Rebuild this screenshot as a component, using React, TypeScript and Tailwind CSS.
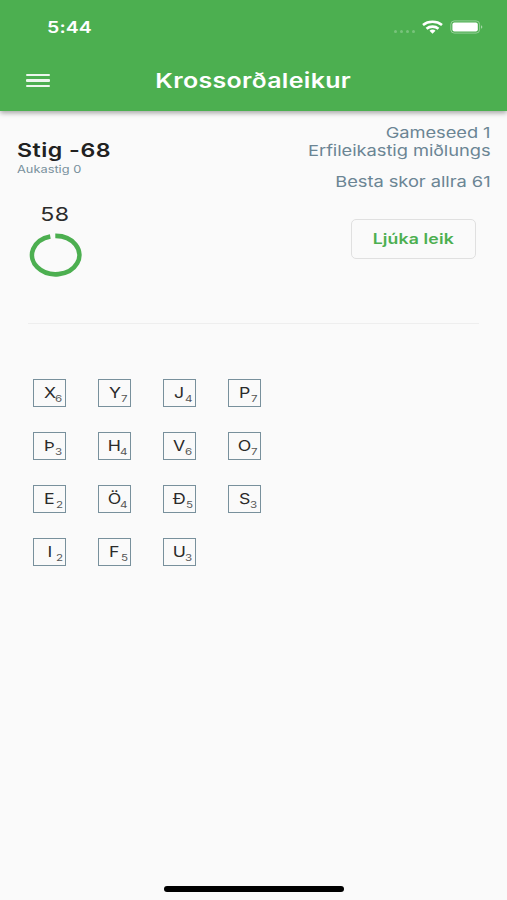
import clsx from "clsx";

interface Tile {
  letter: string;
  points: number;
  // where the small number starts inside the tile
  offset: string;
}

const tiles: Tile[] = [
  { letter: "X", points: 6, offset: "left-[21px]" },
  { letter: "Y", points: 7, offset: "left-[22px]" },
  { letter: "J", points: 4, offset: "left-[20.5px]" },
  { letter: "P", points: 7, offset: "left-[22px]" },
  { letter: "Þ", points: 3, offset: "left-[21px]" },
  { letter: "H", points: 4, offset: "left-[20.5px]" },
  { letter: "V", points: 6, offset: "left-[20.5px]" },
  { letter: "O", points: 7, offset: "left-[22px]" },
  { letter: "E", points: 2, offset: "left-[22px]" },
  { letter: "Ö", points: 4, offset: "left-[20.5px]" },
  { letter: "Ð", points: 5, offset: "left-[22px]" },
  { letter: "S", points: 3, offset: "left-[21px]" },
  { letter: "I", points: 2, offset: "left-[22px]" },
  { letter: "F", points: 5, offset: "left-[22px]" },
  { letter: "U", points: 3, offset: "left-[21px]" },
];

/* ================= STATUS BAR ================= */
function StatusBar() {
  return (
    <div className="flex h-[50px] items-start justify-between pl-[46.5px] pr-[23px] pt-[15px] text-white">
      <span className="inline-block origin-left scale-x-[1.22] text-[16px] leading-[24px] font-semibold tracking-[0.1px]">
        5:44
      </span>
      <div className="flex h-[24px] items-center">
        <div className="mt-[9px] mr-[7px] flex gap-[3px]">
          <i className="h-[3px] w-[3px] rounded-full bg-white/25" />
          <i className="h-[3px] w-[3px] rounded-full bg-white/25" />
          <i className="h-[3px] w-[3px] rounded-full bg-white/25" />
          <i className="h-[3px] w-[3px] rounded-full bg-white/25" />
        </div>
        <svg
          className="mr-[7px] h-[14px] w-[21px]"
          viewBox="0 0 21 14"
          fill="none"
          stroke="white"
          strokeWidth="2.6"
        >
          <path d="M1 4.9C6.2 0.7 14.8 0.7 20 4.9" />
          <path d="M4.5 8.7C7.8 5.9 13.2 5.9 16.5 8.7" />
          <path
            d="M7.5 10.8C9.2 9.2 11.8 9.2 13.5 10.8L10.5 13.8Z"
            fill="white"
            stroke="none"
          />
        </svg>
        <svg className="h-[14px] w-[34px]" viewBox="0 0 34 14">
          <rect
            x="0.8"
            y="0.9"
            width="28.8"
            height="12.2"
            rx="3.5"
            fill="none"
            stroke="white"
            strokeOpacity="0.4"
          />
          <rect x="2.4" y="2.4" width="25.4" height="9.2" rx="2" fill="white" />
          <path d="M31 5.2C32.8 5.8 32.8 8.2 31 8.8Z" fill="white" fillOpacity="0.5" />
        </svg>
      </div>
    </div>
  );
}

/* ================= LETTER TILE ================= */
function LetterTile({ letter, points, offset }: Tile) {
  return (
    <div className="relative flex h-[28px] w-[33px] items-center justify-center border-[1.5px] border-[#78909c] text-[#2b2b2b]">
      <span className="inline-block scale-x-[1.22] text-[14.5px] leading-[26px]">
        {letter}
      </span>
      <span
        className={clsx(
          "absolute bottom-[1px] inline-block origin-left scale-x-[1.22] text-[9.5px] leading-[12px] text-[#555]",
          offset
        )}
      >
        {points}
      </span>
    </div>
  );
}

export default function App() {
  return (
    <div className="flex h-[900px] w-[507px] flex-col overflow-hidden bg-[#fafafa] font-['Inter','Liberation_Sans',sans-serif]">
      {/* ================= HEADER ================= */}
      <header className="h-[110.5px] shrink-0 bg-[#4caf50] shadow-[0_2px_5px_rgba(0,0,0,0.35)]">
        <StatusBar />
        <div className="grid h-[61px] grid-cols-[1fr_auto_1fr] items-center px-[25.5px]">
          <div className="flex w-[24px] flex-col gap-[3px]">
            <i className="h-[2.5px] rounded-[1px] bg-white/90" />
            <i className="h-[2.5px] rounded-[1px] bg-white/90" />
            <i className="h-[2.5px] rounded-[1px] bg-white/90" />
          </div>
          <h1 className="mt-[2px] scale-x-[1.22] text-[20.5px] font-semibold tracking-[0.25px] text-white">
            Krossorðaleikur
          </h1>
        </div>
      </header>

      {/* ================= SCORES ================= */}
      <section className="flex h-[91.5px] shrink-0 justify-between px-[16.5px] pt-[13px]">
        <div className="pt-[15.5px]">
          <h2 className="origin-left scale-x-[1.22] text-[19px] leading-[24px] font-semibold tracking-[0.4px] text-[#212121]">
            Stig -68
          </h2>
          <p className="origin-left scale-x-[1.22] text-[10.5px] leading-[13px] text-[#78909c]">
            Aukastig 0
          </p>
        </div>
        <div className="origin-right scale-x-[1.22] text-right text-[15px] leading-[18px] tracking-[-0.05px] text-[#6b8594]">
          <p>Gameseed 1</p>
          <p>Erfileikastig miðlungs</p>
          <p className="mt-[13px]">Besta skor allra 61</p>
        </div>
      </section>

      {/* ================= TIMER + FINISH ================= */}
      <section className="mx-[28px] flex h-[122px] shrink-0 justify-between border-b border-[#eeeeee] pr-[3px]">
        <div className="flex w-[54px] flex-col items-center">
          <span className="scale-x-[1.22] text-[19px] leading-[26px] tracking-[0.3px] text-[#2b2b2b]">
            58
          </span>
          <svg className="mt-[4px] h-[46px] w-[54px]" viewBox="0 0 54 46">
            <path
              d="M27.3 3.9A23.7 19.2 0 1 1 22.3 4.4"
              fill="none"
              stroke="#4caf50"
              strokeWidth="4.6"
            />
          </svg>
        </div>
        <button className="mt-[17px] flex h-[40px] w-[125px] items-center justify-center rounded-[5px] border-[1.5px] border-[#e0e0e0] text-[#4caf50]">
          <span className="scale-x-[1.22] text-[14.5px] font-semibold tracking-[0.1px]">
            Ljúka leik
          </span>
        </button>
      </section>

      {/* ================= LETTERS ================= */}
      <section className="grid grid-cols-[repeat(4,33px)] gap-x-[32px] gap-y-[25.3px] pt-[54.5px] pl-[33px]">
        {tiles.map((tile) => (
          <LetterTile key={tile.letter} {...tile} />
        ))}
      </section>

      <div className="mt-auto mb-[8.5px] ml-[164px] h-[6px] w-[180px] rounded-full bg-black" />
    </div>
  );
}
